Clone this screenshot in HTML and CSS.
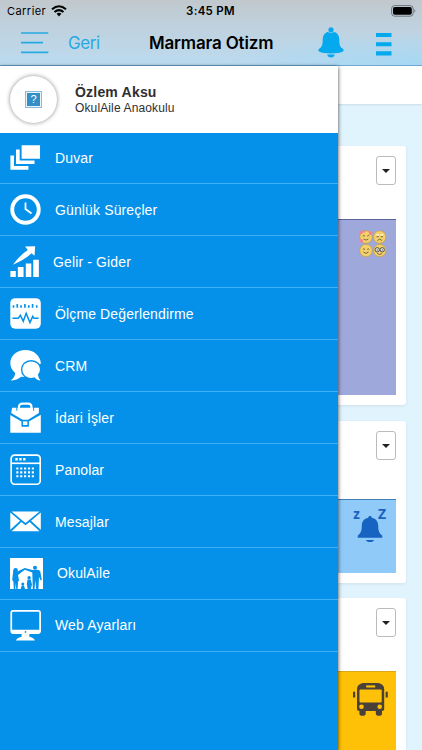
FILE: index.html
```html
<!DOCTYPE html>
<html lang="tr">
<head>
  <meta charset="UTF-8" />
  <meta name="viewport" content="width=device-width, initial-scale=1.0" />
  <title>Marmara Otizm</title>
  <link rel="stylesheet" href="styles.css">
</head>
<body>
  <header class="header">
    <div class="status-bar">
      <div class="carrier">
        <span>Carrier</span>
        <svg width="16" height="12" viewBox="0 0 16 12" fill="none" stroke="#000" stroke-width="2.1">
          <path d="M1 4.2Q8 -1.7 15 4.2M3.5 7Q8 3.3 12.5 7" />
          <path d="M5.6 8.8Q8 6.8 10.4 8.8L8 11.4Z" fill="#000" stroke="none" />
        </svg>
      </div>
      <div class="time">3:45 PM</div>
      <svg class="battery" width="25" height="12" viewBox="0 0 25 12">
        <rect x=".6" y=".6" width="21.6" height="10.6" rx="3" fill="none" stroke="#697680" />
        <rect x="2" y="2" width="18.8" height="7.8" rx="1.7" />
        <path d="M23.4 4.2Q25.4 5.9 23.4 7.6Z" fill="#697680" />
      </svg>
    </div>
    <nav class="nav-bar">
      <button class="menu-btn" aria-label="Menü">
        <svg width="28" height="22" viewBox="0 0 28 22" stroke="#27aae1" stroke-width="1.7">
          <path d="M0 1H27.3M0 10.7H22M0 20.4H27.3" />
        </svg>
      </button>
      <a class="back" href="#">Geri</a>
      <h1>Marmara Otizm</h1>
      <svg class="bell" width="26" height="31" viewBox="0 0 26 31" fill="#05a9ed">
        <circle cx="13" cy="2.8" r="2.6" />
        <path d="M13 4.2C7.5 4.2 4.7 8 4.7 12.5C4.7 18.5 3.8 20 1.2 21.7C0 22.6 0 24.1 1.2 24.6C3.5 26.1 8 26.4 13 26.4S22.5 26.1 24.8 24.6C26 24.1 26 22.6 24.8 21.7C22.2 20 21.3 18.5 21.3 12.5C21.3 8 18.5 4.2 13 4.2Z" />
        <path d="M9.2 27.4H16.8C16.2 31.4 9.8 31.4 9.2 27.4Z" />
        <path d="M9.8 4.7Q13 7 16.2 4.7" fill="none" stroke="#bdd9ea" stroke-width=".6" />
      </svg>
      <svg class="more" width="16" height="23" viewBox="0 0 16 23" fill="#05a9ed">
        <path d="M0 0H15.5V4.1H0ZM0 9.2H15.5V13.3H0ZM0 18.3H15.5V22.4H0Z" />
      </svg>
    </nav>
  </header>

  <main class="page">
    <div class="toolbar"></div>
    <section class="card moods">
      <button class="dropdown"></button>
      <div class="media">
        <svg width="28" height="28" viewBox="0 0 28 28">
          <g fill="#f5d269" stroke="#c6a04b" stroke-width=".8">
            <circle cx="7" cy="7" r="6.2" /><circle cx="20.7" cy="7" r="6.2" />
            <circle cx="7" cy="20.5" r="6.2" /><circle cx="20.7" cy="20.5" r="6.2" />
          </g>
          <g fill="none" stroke="#695744" stroke-width=".9">
            <path d="M3.8 6.2Q5 4.5 6 6.2M8.2 6.2Q9.2 4.5 10.4 6.2M4.6 9Q7 11.3 9.4 9" />
            <path d="M17.5 6.7H19.8M21.8 6.7H24M18.3 10.5Q20.7 7.8 23 10.5" />
            <path d="M3.8 19.5Q5 18 6 19.5M8.2 19.5Q9.2 18 10.4 19.5M4.4 22Q7 24.8 9.6 22M18.2 23.5Q20.7 25.5 23 23.5" />
          </g>
          <g fill="#f5818e">
            <circle cx="2" cy="2.6" r="1.8" /><circle cx="11.6" cy="3" r="1.9" />
            <circle cx="2.2" cy="10.8" r="1.9" /><circle cx="5" cy="1.6" r="1.2" />
          </g>
          <path d="M17.2 4.9H20M21.5 4.9H24.2" stroke="#fff" />
          <g fill="#e9e8df" stroke="#504d44" stroke-width="1">
            <circle cx="18.2" cy="19.8" r="2.2" /><circle cx="23.2" cy="19.8" r="2.2" />
          </g>
          <path d="M17.8 20H18.8M22.8 20H23.8" stroke="#333" />
        </svg>
      </div>
    </section>
    <section class="card sleep">
      <button class="dropdown"></button>
      <div class="media">
        <svg width="34" height="34" viewBox="0 0 34 34" fill="#1763c2">
          <path d="M17 7.1C16 7.1 15.4 7.8 15.2 8.7C11 9.4 8.8 12.8 8.8 16.5C8.8 22.6 7.8 23.7 4.7 26.8V28.8H29.3V26.8C26.2 23.7 25.2 22.6 25.2 16.5C25.2 12.8 23 9.4 18.8 8.7C18.6 7.8 18 7.1 17 7.1ZM13 31H21Q20.4 33 17 33T13 31Z" />
          <text x=".2" y="10.3" class="z-small">z</text>
          <text x="25" y="10.3" class="z-large">Z</text>
        </svg>
      </div>
    </section>
    <section class="card service">
      <button class="dropdown"></button>
      <div class="media">
        <svg width="35" height="33" viewBox="0 0 35 33" fill="#494139">
          <path d="M9.6 0H25.6Q31.2 1.5 31.2 6V26.3Q31.2 28 29 28V30.5Q29 32.8 26.2 32.8Q22.8 32.8 22.8 30.5V28H12.7V30.5Q12.7 32.8 9.5 32.8Q6.4 32.8 6.4 30.5V28Q4 28 4 26.3V6Q4 1.5 9.6 0Z" />
          <path d="M0 9.6Q0 8.5 1.1 8.5T2.2 9.6V14.6H0ZM32.6 9.6Q32.6 8.5 33.7 8.5T34.8 9.6V14.6H32.6Z" />
          <rect x="6.5" y="6.6" width="22.2" height="12.8" rx="1" fill="#ffc107" />
          <path d="M13.2 2.4H22.2V4.5H13.2Z" fill="#ffc107" />
          <g fill="#ffc107"><circle cx="8.5" cy="23.7" r="2.3" /><circle cx="26.7" cy="23.7" r="2.3" /></g>
        </svg>
      </div>
    </section>
  </main>

  <aside class="drawer">
    <div class="profile">
      <div class="avatar">
        <svg width="17" height="17" viewBox="0 0 17 17">
          <rect x=".5" y=".5" width="16" height="16" fill="#e9f4fa" stroke="#8dbad6" />
          <rect x="2" y="2" width="13" height="13" fill="#338fc6" />
          <text x="8.5" y="12.3" class="question">?</text>
        </svg>
      </div>
      <div class="user">
        <strong>Özlem Aksu</strong>
        <span>OkulAile Anaokulu</span>
      </div>
    </div>
    <ul class="menu">
      <li>
        <svg viewBox="0 0 32 32"><path d="M12 3.3H31V17.3H12ZM6.2 7.8H10V19H25.3V22.7H6.2ZM.4 14H4.1V24.9H19V28.7H.4Z" /></svg>
        <span>Duvar</span>
      </li>
      <li>
        <svg viewBox="0 0 32 32" fill="none" stroke="#fff"><circle cx="16" cy="16" r="13.7" stroke-width="4" /><path d="M16 8.7V15.5L22.2 20.1" stroke-width="1.8" /></svg>
        <span>Günlük Süreçler</span>
      </li>
      <li class="narrow">
        <svg viewBox="0 0 32 32"><path d="M.4 25.8H6V32H.4ZM8.1 21.7H14V32H8.1ZM16.3 18H22V32H16.3ZM24 14.2H29.8V32H24ZM3 19.3Q10 9.7 18.4 4.2L15.5.6L26 .2L25.3 10L22.2 7.6Q15.4 14 3 19.3Z" /></svg>
        <span>Gelir - Gider</span>
      </li>
      <li>
        <svg viewBox="0 0 32 32">
          <rect x=".3" y=".2" width="31.5" height="31.5" rx="5" />
          <path d="M3.6 7.6V10.1M7.5 6.1V10.1M11.4 7.6V10.1M15.4 6.1V10.1M19.4 7.6V10.1M23.3 6.1V10.1M27.6 7.6V10.1" stroke="#0591e9" stroke-width="1.7" />
          <path d="M2.5 21H8.4L10.7 17.8L13.7 24L16.7 15.8L20.6 25.4L23.5 19L24.8 21H29.5" fill="none" stroke="#0591e9" stroke-width="1.6" />
        </svg>
        <span>Ölçme Değerlendirme</span>
      </li>
      <li>
        <svg viewBox="0 0 32 32">
          <path d="M16 0C7 0 .3 6 .3 13.5C.3 17.5 2.1 21 5.3 23.7Q5.3 27.8 .7 31.5Q7.5 31.2 11.5 27.5L16 27.8L24 20L31.9 14C31.3 5.5 24.3 0 16 0Z" />
          <path d="M21.8 11.8C16.5 11.8 12.8 15.5 12.8 20.3S16.7 28.8 21.8 28.8Q23.8 28.8 25.3 28.2Q27.4 31.4 31.6 31.4Q29 28.9 28.8 25.4Q30.9 23.2 30.9 20.3C30.9 15.5 27.1 11.8 21.8 11.8Z" stroke="#0591e9" stroke-width="3" paint-order="stroke" />
        </svg>
        <span>CRM</span>
      </li>
      <li>
        <svg viewBox="0 0 32 32">
          <path d="M9.2 7V5.3Q9.2 1.7 13 1.7H18.7Q22.2 1.7 22.2 5.3V7" fill="none" stroke="#fff" stroke-width="2.2" />
          <path d="M2.2 6H29.8V11.4L18.7 18.4H13L1.2 11.3ZM.3 13.4L11.8 20.1V25.5H19.5V20.1L31.8 13.2V31.8H.3Z" />
          <path d="M13.4 20H17.9V23.7H13.4Z" />
          <path d="M7 5.3V9M24.4 5.3V9" stroke="#0591e9" stroke-width="1" />
        </svg>
        <span>İdari İşler</span>
      </li>
      <li>
        <svg viewBox="0 0 32 32" fill="none" stroke="#fff" stroke-width="1.7">
          <rect x="1.2" y="1.2" width="30" height="30" rx="3.5" /><path d="M1.2 9.6H31.2" />
          <path d="M5.5 5.5H8M9.5 5.5H12M13.5 5.5H16" stroke-width="2.5" />
          <path d="M6.5 15H24.7M6.5 19H24.7M6.5 23H24.7" stroke-width="2.2" stroke-dasharray="2.2 1.8" />
        </svg>
        <span>Panolar</span>
      </li>
      <li>
        <svg viewBox="0 0 32 32"><path d="M1.7 5.8H30.5L20.1 14.3L16 17.6L11.9 14.3ZM.3 6.8L10.4 15.3L.3 24.5ZM31.8 6.8V24.5L21.7 15.3ZM11.7 16.5L16 19.8L20.3 16.5L30.5 26H1.7Z" /></svg>
        <span>Mesajlar</span>
      </li>
      <li class="wide">
        <svg viewBox="0 0 33 31">
          <path d="M0 0H33V31H0Z" />
          <g fill="#0591e9">
            <circle cx="5.6" cy="12.4" r="2.3" /><circle cx="25" cy="9.8" r="2" /><circle cx="19.1" cy="19.7" r="1.7" /><circle cx="12.8" cy="26" r="1.5" />
            <path d="M3.3 12.5L2.2 22L3.4 23.5L3.8 31H5.3L5.7 25L6.2 31H7.6L8 24L9 22.5L8 17L14.8 11.8L22.3 14.6L22.8 31H24.6L25.2 22L26.2 31H28.4L29 19L30.7 22.5L31.8 21.8L30.2 13.3Q29.5 11.8 27.5 11.7L22.4 12L14.8 10L7.5 13.5Z" />
            <path d="M17.5 21.5H20.7L22 26.5L20.8 31H17.6L16.8 26Z" />
            <path d="M11.7 27.5H14L15 31H10.6Z" />
          </g>
        </svg>
        <span>OkulAile</span>
      </li>
      <li>
        <svg viewBox="0 0 32 32">
          <path fill-rule="evenodd" d="M3 0H29Q32 0 32 3V21.5Q32 24.7 29 24.7H20V27.5Q25.5 29.1 25.7 31.6H6.2Q6.4 29.1 12 27.5V24.7H3Q.4 24.7 .4 21.5V3Q.4 0 3 0ZM3.2 1.7Q2.2 1.7 2.2 2.7V20.4H30.2V2.7Q30.2 1.7 29.2 1.7Z" />
          <circle cx="16" cy="22.6" r=".9" fill="#0591e9" />
        </svg>
        <span>Web Ayarları</span>
      </li>
    </ul>
  </aside>
</body>
</html>
```

FILE: styles.css
```css
html, body {
  margin: 0;
  padding: 0;
  height: 100%;
  overflow: hidden;
  background-color: #e0f4fe;
  font-family: 'Liberation Sans', Arial, sans-serif;
}

body {
  position: relative;
}

button {
  background: none;
  border: none;
  padding: 0;
}

svg {
  display: block;
  flex-shrink: 0;
}

.header {
  height: 66px;
  box-sizing: border-box;
  border-bottom: 1px solid #6ca8d1;
  background: radial-gradient(ellipse at 100% 100%, #a6d7f3 0, rgba(166, 215, 243, 0) 35%), linear-gradient(#c1c8cd, #bfd1de 40%, #bcdbef);
  font-family: Inter, sans-serif;
}

.status-bar {
  height: 22px;
  display: grid;
  grid-template-columns: 1fr auto 1fr;
  align-items: center;
  padding: 0 6px 0 7px;
  box-sizing: border-box;
  font-size: 11px;
}

.carrier {
  display: flex;
  align-items: center;
  gap: 5px;
  letter-spacing: 0.45px;
}

.time {
  position: relative;
  left: -1px;
  font-size: 11.5px;
  font-weight: 600;
  letter-spacing: 0.3px;
}

.battery {
  justify-self: end;
}

.nav-bar {
  height: 43px;
  display: grid;
  grid-template-columns: 47px 81px 169px 60px 1fr;
  padding-left: 21px;
}

.menu-btn {
  height: 22px;
  margin-top: 10px;
}

.back {
  margin-top: 11px;
  line-height: 21px;
  color: #27aae1;
  font-size: 17px;
  text-decoration: none;
  letter-spacing: -0.4px;
}

h1 {
  margin: 11px 0 0;
  font-size: 17px;
  line-height: 21px;
  font-weight: 600;
  letter-spacing: -0.17px;
}

.bell {
  margin-top: 5px;
}

.more {
  margin: 11px 0 0 -2px;
}

.page {
  height: calc(100% - 66px);
  overflow: hidden;
  display: flex;
  flex-direction: column;
}

.toolbar {
  height: 38px;
  margin-bottom: 42px;
  background: #fff;
  box-shadow: 0 1px 2px #ccdce3;
  flex-shrink: 0;
}

.card {
  height: 259px;
  margin: 0 16px 16px;
  padding: 10px;
  box-sizing: border-box;
  border-radius: 3px;
  background: #fff;
  box-shadow: 0 1px 3px #d0e1e8;
  display: flex;
  flex-direction: column;
  flex-shrink: 0;
}

.dropdown {
  width: 20px;
  height: 29px;
  margin-bottom: 34px;
  border: 1px solid #bbb;
  border-radius: 3px;
  align-self: flex-end;
  display: flex;
  align-items: center;
  justify-content: center;
  flex-shrink: 0;
}

.dropdown::after {
  content: "";
  border: 4px solid transparent;
  border-top-color: #222;
  border-bottom: 0;
}

.media {
  flex: 1;
  display: flex;
  justify-content: flex-end;
  box-sizing: border-box;
}

.moods .media {
  padding: 10px 9px;
  background: #9fa8da;
  border-top: 1px solid #5b6299;
}

.sleep {
  height: 162px;
  margin-bottom: 15px;
}

.sleep .media {
  margin-top: 5px;
  padding: 9px 9px 0;
  background: #90caf9;
  border-top: 1px solid #3f80b9;
}

.sleep .media svg {
  overflow: visible;
}

.z-small,
.z-large {
  font-family: 'Open Sans', sans-serif;
  font-weight: 700;
  font-size: 14px;
}

.z-small {
  font-size: 13.5px;
}

.service .media {
  padding: 11px 8px;
  background: #ffc107;
  border-top: 1px solid #d9a719;
}

/* side menu over the page */
.drawer {
  position: absolute;
  top: 66px;
  left: 0;
  bottom: 0;
  width: 337.6px;
  background: #0591e9;
  box-shadow: 0 1px 4px rgba(0, 0, 0, 0.75);
}

.profile {
  height: 66.5px;
  display: flex;
  align-items: center;
  gap: 18px;
  padding-left: 10px;
  background: #fff;
}

.avatar {
  width: 47px;
  height: 47px;
  border-radius: 50%;
  box-shadow: 0 0 4px #888;
  display: flex;
  align-items: center;
  justify-content: center;
}

.question {
  fill: #fff;
  font-size: 11px;
  text-anchor: middle;
}

.user {
  display: flex;
  flex-direction: column;
  margin-top: 2px;
  color: #302e30;
  font-size: 12px;
  line-height: 16px;
  letter-spacing: 0.13px;
}

.user strong {
  font-size: 14px;
  letter-spacing: 0.2px;
}

.menu {
  list-style: none;
  margin: 0;
  padding: 0;
}

.menu li {
  height: 51.95px;
  box-sizing: border-box;
  border-bottom: 1px solid #43b0f5;
  padding-left: 10px;
  display: flex;
  align-items: center;
  gap: 14px;
  color: #fff;
  font-size: 14px;
  letter-spacing: 0.13px;
}

.menu svg {
  width: 31px;
  height: 31px;
  fill: #fff;
}

.menu svg[fill="none"] {
  fill: none;
}

.menu .narrow {
  gap: 12px;
}

.menu .wide svg {
  width: 33px;
}
```
